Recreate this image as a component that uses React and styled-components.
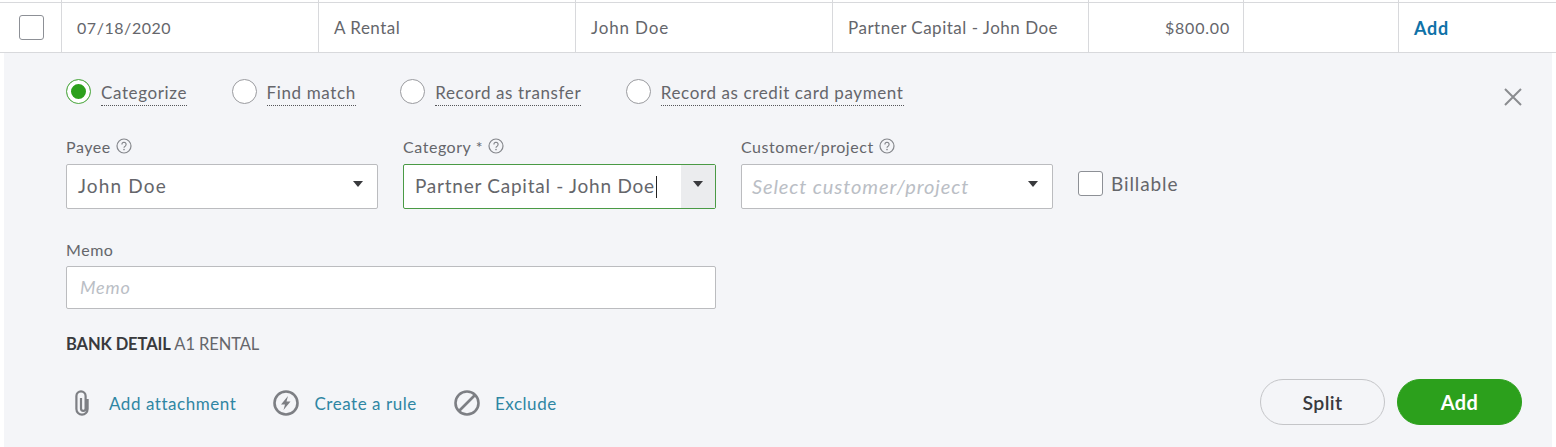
import React from 'react'
import styled, { createGlobalStyle } from 'styled-components'

const colors = {
    line: '#d8d9dc',
    panel: '#f4f5f8',
    text: '#65666b',
    dark: '#393a3d',
    muted: '#babec5',
    green: '#2ca01c',
    focus: '#4a9a45',
    link: '#2f86a3',
    icon: '#7d7f84',
    border: '#bbbcbf',
}

const GlobalStyle = createGlobalStyle`
    html, body {
        margin: 0;
        padding: 0;
        background: #fff;
        overflow: hidden;
    }
    body {
        font-family: Lato, "Open Sans", sans-serif;
        color: ${colors.text};
    }
    * {
        box-sizing: border-box;
    }
`

const Page = styled.div`
    width: 1556px;
    height: 447px;
`

const Row = styled.div`
    display: grid;
    grid-template-columns: 62px 257px 257px 257px 256px 155px 155px 157px;
    height: 53px;
    border-bottom: 1px solid ${colors.line};
    background: linear-gradient(${colors.line}, ${colors.line}) 0 2px / 100% 1px no-repeat;
`

const Cell = styled.div`
    display: flex;
    align-items: center;
    justify-content: ${(p) => (p.$right ? 'flex-end' : 'flex-start')};
    padding: 3px ${(p) => (p.$right ? '13px' : '0')} 0 ${(p) => (p.$bare ? '19px' : '15px')};
    border-right: ${(p) => (p.$last ? 'none' : `1px solid ${colors.line}`)};
    font-size: ${(p) => (p.$numeric ? '16px' : '17px')};
    letter-spacing: ${(p) => p.$spacing || 0.5}px;
    white-space: nowrap;
`

const CheckBox = styled.span`
    display: block;
    flex: none;
    width: 25px;
    height: 25px;
    background: #fff;
    border: 1px solid #8d9096;
    border-radius: 3px;
`

const RowAction = styled.a`
    color: #0f72a8;
    font-weight: 700;
    font-size: 18px;
    letter-spacing: 0.7px;
`

const Panel = styled.section`
    height: 394px;
    margin: 0 4px;
    padding: 26px 30px 0 62px;
    background: ${colors.panel};
`

const RadioRow = styled.div`
    display: flex;
    align-items: flex-start;
    height: 59px;
`

const RadioOption = styled.label`
    display: flex;
    align-items: flex-start;
    gap: 10px;
    margin-right: 44.5px;
`

const Radio = styled.span`
    display: block;
    flex: none;
    width: 25px;
    height: 25px;
    border-radius: 50%;
    background: ${(p) => (p.$checked ? colors.green : '#fff')};
    border: 1px solid ${(p) => (p.$checked ? '#62b057' : '#9a9b9f')};
    box-shadow: ${(p) => (p.$checked ? 'inset 0 0 0 4px #fff' : 'none')};
`

const RadioLabel = styled.span`
    margin-top: 3px;
    height: 24px;
    line-height: 22px;
    font-size: 17px;
    letter-spacing: 0.62px;
    white-space: nowrap;
    border-bottom: 1px dotted #55565a;
`

const CloseButton = styled.button`
    display: block;
    margin: 9px 0 0 auto;
    padding: 0;
    width: 18px;
    height: 18px;
    border: 0;
    background: none;
    color: #8a8c90;
`

const FieldRow = styled.div`
    display: flex;
    align-items: flex-start;
    gap: 25px;
`

const Field = styled.div`
    width: ${(p) => p.$width}px;
    flex: none;
`

const FieldLabel = styled.div`
    display: flex;
    align-items: center;
    gap: 5px;
    height: 18px;
    padding-bottom: 2px;
    margin-bottom: ${(p) => p.$gap || 8}px;
    font-size: 16px;
    letter-spacing: 0.55px;
`

const InputBox = styled.div`
    display: flex;
    align-items: center;
    justify-content: space-between;
    height: ${(p) => p.$height || 45}px;
    padding-left: ${(p) => p.$indent || 11}px;
    background: #fff;
    border: 1px solid ${(p) => (p.$focused ? colors.focus : colors.border)};
    border-radius: 2px;
    font-size: 19px;
    white-space: nowrap;
`

const Value = styled.span`
    margin-bottom: 2px;
    letter-spacing: ${(p) => p.$spacing || 0.75}px;
`

const Placeholder = styled.span`
    margin-bottom: 2px;
    color: ${colors.muted};
    font-style: italic;
    font-size: ${(p) => p.$size}px;
    letter-spacing: ${(p) => p.$spacing}px;
`

const TextCaret = styled.span`
    display: inline-block;
    width: 1px;
    height: 22px;
    margin-left: 1px;
    background: #222;
    vertical-align: -5px;
`

const DropButton = styled.span`
    display: flex;
    align-items: center;
    justify-content: center;
    align-self: stretch;
    width: ${(p) => (p.$active ? 34 : 38)}px;
    padding-bottom: 5px;
    background: ${(p) => (p.$active ? '#ebecee' : 'transparent')};
`

const Caret = styled.span`
    display: block;
    width: 0;
    height: 0;
    border-left: 5px solid transparent;
    border-right: 5px solid transparent;
    border-top: 6px solid #393a3d;
`

const Billable = styled.label`
    display: flex;
    align-items: center;
    gap: 8px;
    margin-top: 33px;
    font-size: 19px;
    letter-spacing: 0.9px;
`

const MemoField = styled(Field)`
    margin-top: 32px;
`

const BankDetail = styled.div`
    margin-top: 26px;
    font-size: 16.5px;
    line-height: 18px;
    letter-spacing: -0.1px;

    strong {
        color: ${colors.dark};
        font-weight: 700;
    }
`

const Footer = styled.div`
    display: flex;
    align-items: center;
    justify-content: space-between;
    margin-top: 26px;
`

const Actions = styled.div`
    display: flex;
    align-items: center;
    margin: 2px 0 0 8px;
`

const ActionLink = styled.a`
    display: flex;
    align-items: center;
    gap: 15px;
    margin-right: 37px;
    color: ${colors.link};
    font-size: 17px;
    letter-spacing: 0.55px;
    white-space: nowrap;

    svg:first-child {
        flex: none;
    }
`

const Buttons = styled.div`
    display: flex;
    align-items: center;
    gap: 12px;
`

const PillButton = styled.button`
    width: 125px;
    height: 46px;
    border-radius: 23px;
    border: 1px solid ${(p) => (p.$primary ? colors.green : '#c4c5c8')};
    background: ${(p) => (p.$primary ? colors.green : 'transparent')};
    color: ${(p) => (p.$primary ? '#fff' : colors.dark)};
    font-family: inherit;
    font-size: ${(p) => (p.$primary ? 20 : 19.5)}px;
    font-weight: ${(p) => (p.$primary ? 700 : 600)};
    letter-spacing: 0.4px;
`

const HelpIcon = () => (
    <svg width="16" height="16" viewBox="0 0 16 16" fill="none" stroke="#85878c">
        <circle cx="8" cy="8" r="7" strokeWidth="1.2" />
        <path d="M5.9 6.4a2.1 2.1 0 1 1 3.2 1.8c-.7.4-1.1.8-1.1 1.5" strokeWidth="1.2" />
        <circle cx="8" cy="11.6" r=".8" fill="#85878c" stroke="none" />
    </svg>
)

const CloseIcon = () => (
    <svg width="18" height="18" viewBox="0 0 18 18" fill="none" stroke="currentColor" strokeWidth="2">
        <path d="M1 1l16 16M17 1L1 17" />
    </svg>
)

const ClipIcon = () => (
    <svg width="20" height="26" viewBox="0 0 20 26" fill="none" stroke={colors.icon} strokeWidth="2.2">
        <path d="M7 8v10.5a2.3 2.3 0 0 0 4.6 0V6a4.6 4.6 0 0 0-9.2 0v13a5.6 5.6 0 0 0 11.2 0V9" />
    </svg>
)

const BoltIcon = () => (
    <svg width="26" height="26" viewBox="0 0 26 26" fill="none">
        <circle cx="13" cy="13" r="11.5" stroke={colors.icon} strokeWidth="2.6" />
        <path d="M15 6L8 14.5h4L10.5 20l7-8.5h-4z" fill={colors.icon} />
    </svg>
)

const BanIcon = () => (
    <svg width="26" height="26" viewBox="0 0 26 26" fill="none" stroke={colors.icon} strokeWidth="2.6">
        <circle cx="13" cy="13" r="11.5" />
        <path d="M5 21L21 5" />
    </svg>
)

const radios = ['Categorize', 'Find match', 'Record as transfer', 'Record as credit card payment']

const App = () => {
    return (
        <Page>
            <GlobalStyle />
            <Row>
                <Cell $bare><CheckBox /></Cell>
                <Cell $numeric $spacing={0.55}>07/18/2020</Cell>
                <Cell>A Rental</Cell>
                <Cell $spacing={0.85}>John Doe</Cell>
                <Cell>Partner Capital - John Doe</Cell>
                <Cell $right $numeric $spacing={0.8}>$800.00</Cell>
                <Cell />
                <Cell $last><RowAction>Add</RowAction></Cell>
            </Row>
            <Panel>
                <RadioRow>
                    {radios.map((label, i) => (
                        <RadioOption key={label}>
                            <Radio $checked={i === 0} />
                            <RadioLabel>{label}</RadioLabel>
                        </RadioOption>
                    ))}
                    <CloseButton><CloseIcon /></CloseButton>
                </RadioRow>

                <FieldRow>
                    <Field $width={312}>
                        <FieldLabel>Payee <HelpIcon /></FieldLabel>
                        <InputBox>
                            <Value $spacing={1.15}>John Doe</Value>
                            <DropButton><Caret /></DropButton>
                        </InputBox>
                    </Field>
                    <Field $width={313}>
                        <FieldLabel>Category * <HelpIcon /></FieldLabel>
                        <InputBox $focused>
                            <Value>Partner Capital - John Doe<TextCaret /></Value>
                            <DropButton $active><Caret /></DropButton>
                        </InputBox>
                    </Field>
                    <Field $width={312}>
                        <FieldLabel>Customer/project <HelpIcon /></FieldLabel>
                        <InputBox $indent={10}>
                            <Placeholder $size={20} $spacing={0.9}>Select customer/project</Placeholder>
                            <DropButton><Caret /></DropButton>
                        </InputBox>
                    </Field>
                    <Billable><CheckBox /> Billable</Billable>
                </FieldRow>

                <MemoField $width={650}>
                    <FieldLabel $gap={7}>Memo</FieldLabel>
                    <InputBox $height={43} $indent={13}>
                        <Placeholder $size={18} $spacing={0.8}>Memo</Placeholder>
                    </InputBox>
                </MemoField>

                <BankDetail><strong>BANK DETAIL</strong> A1 RENTAL</BankDetail>

                <Footer>
                    <Actions>
                        <ActionLink><ClipIcon /> Add attachment</ActionLink>
                        <ActionLink><BoltIcon /> Create a rule</ActionLink>
                        <ActionLink><BanIcon /> Exclude</ActionLink>
                    </Actions>
                    <Buttons>
                        <PillButton>Split</PillButton>
                        <PillButton $primary>Add</PillButton>
                    </Buttons>
                </Footer>
            </Panel>
        </Page>
    )
}

export default App
